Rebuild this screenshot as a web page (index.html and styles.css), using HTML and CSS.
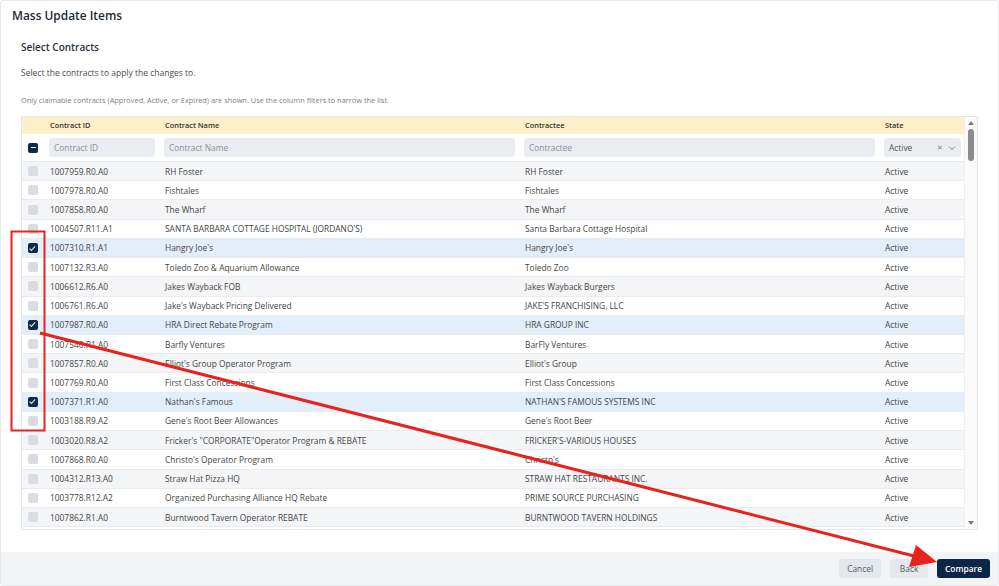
FILE: index.html
```html
<!DOCTYPE html>
<html lang="en">
<head>
    <meta charset="UTF-8">
    <title>Mass Update Items</title>
    <link rel="stylesheet" href="styles.css">
</head>
<body>
<div class="modal">
    <div class="modal-title">Mass Update Items</div>
    <div class="modal-body">
        <h2>Select Contracts</h2>
        <p class="lead">Select the contracts to apply the changes to.</p>
        <p class="note">Only claimable contracts (Approved, Active, or Expired) are shown. Use the column filters to narrow the list.</p>

        <div class="table">
            <div class="grid">
                <div class="row head">
                    <div></div>
                    <div class="cell">Contract ID</div>
                    <div class="cell">Contract Name</div>
                    <div class="cell">Contractee</div>
                    <div class="cell">State</div>
                </div>
                <div class="row filters">
                    <div class="cbx-cell"><span class="cbx partial"></span></div>
                    <div class="cell"><div class="filter">Contract ID</div></div>
                    <div class="cell"><div class="filter">Contract Name</div></div>
                    <div class="cell"><div class="filter">Contractee</div></div>
                    <div class="cell"><div class="filter select"><span class="val">Active</span><span class="icons">&#x2715;<svg width="8" height="6" viewBox="0 0 8 6"><path d="M1 1.5 L4 4.5 L7 1.5" fill="none" stroke="#777" stroke-width="0.9"/></svg></span></div></div>
                </div>

                <div class="row odd"><div class="cbx-cell"><span class="cbx"></span></div><div class="cell">1007959.R0.A0</div><div class="cell">RH Foster</div><div class="cell">RH Foster</div><div class="cell">Active</div></div>
                <div class="row"><div class="cbx-cell"><span class="cbx"></span></div><div class="cell">1007978.R0.A0</div><div class="cell">Fishtales</div><div class="cell">Fishtales</div><div class="cell">Active</div></div>
                <div class="row odd"><div class="cbx-cell"><span class="cbx"></span></div><div class="cell">1007858.R0.A0</div><div class="cell">The Wharf</div><div class="cell">The Wharf</div><div class="cell">Active</div></div>
                <div class="row"><div class="cbx-cell"><span class="cbx"></span></div><div class="cell">1004507.R11.A1</div><div class="cell">SANTA BARBARA COTTAGE HOSPITAL (JORDANO'S)</div><div class="cell">Santa Barbara Cottage Hospital</div><div class="cell">Active</div></div>
                <div class="row selected"><div class="cbx-cell"><span class="cbx checked"></span></div><div class="cell">1007310.R1.A1</div><div class="cell">Hangry Joe's</div><div class="cell">Hangry Joe's</div><div class="cell">Active</div></div>
                <div class="row"><div class="cbx-cell"><span class="cbx"></span></div><div class="cell">1007132.R3.A0</div><div class="cell">Toledo Zoo &amp; Aquarium Allowance</div><div class="cell">Toledo Zoo</div><div class="cell">Active</div></div>
                <div class="row odd"><div class="cbx-cell"><span class="cbx"></span></div><div class="cell">1006612.R6.A0</div><div class="cell">Jakes Wayback FOB</div><div class="cell">Jakes Wayback Burgers</div><div class="cell">Active</div></div>
                <div class="row"><div class="cbx-cell"><span class="cbx"></span></div><div class="cell">1006761.R6.A0</div><div class="cell">Jake's Wayback Pricing Delivered</div><div class="cell">JAKE'S FRANCHISING, LLC</div><div class="cell">Active</div></div>
                <div class="row selected"><div class="cbx-cell"><span class="cbx checked"></span></div><div class="cell">1007987.R0.A0</div><div class="cell">HRA Direct Rebate Program</div><div class="cell">HRA GROUP INC</div><div class="cell">Active</div></div>
                <div class="row"><div class="cbx-cell"><span class="cbx"></span></div><div class="cell">1007540.R1.A0</div><div class="cell">Barfly Ventures</div><div class="cell">BarFly Ventures</div><div class="cell">Active</div></div>
                <div class="row odd"><div class="cbx-cell"><span class="cbx"></span></div><div class="cell">1007857.R0.A0</div><div class="cell">Elliot's Group Operator Program</div><div class="cell">Elliot's Group</div><div class="cell">Active</div></div>
                <div class="row"><div class="cbx-cell"><span class="cbx"></span></div><div class="cell">1007769.R0.A0</div><div class="cell">First Class Concessions</div><div class="cell">First Class Concessions</div><div class="cell">Active</div></div>
                <div class="row selected"><div class="cbx-cell"><span class="cbx checked"></span></div><div class="cell">1007371.R1.A0</div><div class="cell">Nathan's Famous</div><div class="cell">NATHAN'S FAMOUS SYSTEMS INC</div><div class="cell">Active</div></div>
                <div class="row"><div class="cbx-cell"><span class="cbx"></span></div><div class="cell">1003188.R9.A2</div><div class="cell">Gene's Root Beer Allowances</div><div class="cell">Gene's Root Beer</div><div class="cell">Active</div></div>
                <div class="row odd"><div class="cbx-cell"><span class="cbx"></span></div><div class="cell">1003020.R8.A2</div><div class="cell">Fricker's "CORPORATE"Operator Program &amp; REBATE</div><div class="cell">FRICKER'S-VARIOUS HOUSES</div><div class="cell">Active</div></div>
                <div class="row"><div class="cbx-cell"><span class="cbx"></span></div><div class="cell">1007868.R0.A0</div><div class="cell">Christo's Operator Program</div><div class="cell">Christo's</div><div class="cell">Active</div></div>
                <div class="row odd"><div class="cbx-cell"><span class="cbx"></span></div><div class="cell">1004312.R13.A0</div><div class="cell">Straw Hat Pizza HQ</div><div class="cell">STRAW HAT RESTAURANTS INC.</div><div class="cell">Active</div></div>
                <div class="row"><div class="cbx-cell"><span class="cbx"></span></div><div class="cell">1003778.R12.A2</div><div class="cell">Organized Purchasing Alliance HQ Rebate</div><div class="cell">PRIME SOURCE PURCHASING</div><div class="cell">Active</div></div>
                <div class="row odd"><div class="cbx-cell"><span class="cbx"></span></div><div class="cell">1007862.R1.A0</div><div class="cell">Burntwood Tavern Operator REBATE</div><div class="cell">BURNTWOOD TAVERN HOLDINGS</div><div class="cell">Active</div></div>
            </div>
            <div class="scrollbar">
                <span class="arrow up"></span>
                <span class="thumb"></span>
                <span class="arrow down"></span>
            </div>
        </div>
    </div>
    <div class="modal-footer">
        <button class="btn">Cancel</button>
        <button class="btn">Back</button>
        <button class="btn primary">Compare</button>
    </div>
</div>

<!-- annotation drawn over the screenshot -->
<svg class="markup" width="999" height="586" viewBox="0 0 999 586">
    <rect x="11.5" y="231.5" width="33" height="199" fill="none" stroke="#e8221c" stroke-width="2"/>
    <line x1="40" y1="333" x2="914" y2="556" stroke="#e8221c" stroke-width="3"/>
    <polygon points="937,562 909,567 916,545" fill="#e8221c"/>
</svg>
</body>
</html>
```

FILE: styles.css
```css
body {
    margin: 0;
    font-family: "Open Sans", "Noto Sans", sans-serif;
    background-color: #ffffff;
    color: #444;
}

.modal {
    width: 997px;
    height: 584px;
    border: 1px solid #e6e8eb;
    border-radius: 3px;
    display: flex;
    flex-direction: column;
    overflow: hidden;
}

.modal-title {
    font-size: 11.9px;
    font-weight: 600;
    color: #1e2a36;
    padding: 6px 11px 0;
    height: 20px;
}

.modal-body {
    flex: 1;
    padding: 0 20px;
}

h2 {
    font-size: 10px;
    font-weight: 600;
    color: #2a3440;
    margin: 13px 0 0;
    height: 16px;
}

.lead {
    font-size: 8.5px;
    color: #4a4a4a;
    margin: 11px 0 0;
    height: 14px;
}

.note {
    font-size: 7.4px;
    color: #808080;
    margin: 14px 0 0;
    height: 11px;
}

.table {
    margin-top: 10px;
    height: 414px;
    box-sizing: border-box;
    border: 1px solid #e4e6ea;
    display: flex;
    overflow: hidden;
}

.grid {
    flex: 1;
}

.row {
    display: grid;
    grid-template-columns: 27px 115px 360px 360px 1fr;
    align-items: center;
    height: 19.22px;
    box-sizing: border-box;
    border-bottom: 1px solid #e9ebef;
    font-size: 8.4px;
    color: #454545;
}

.row.odd {
    background-color: #f4f5f7;
}

.row.selected {
    background-color: #e3eefb;
}

.row.head {
    height: 17px;
    background-color: #fdefc9;
    border-bottom: none;
    font-size: 7.4px;
    font-weight: 600;
    color: #333;
    padding-bottom: 2px;
}

.row.filters {
    height: 28px;
    background-color: #ffffff;
}

.cell {
    padding: 0 9px 0 1px;
    white-space: nowrap;
    overflow: hidden;
}

.filters .cell {
    padding-left: 0;
}

.cbx-cell {
    display: flex;
    padding-left: 6px;
}

.cbx {
    width: 10px;
    height: 10px;
    border-radius: 2px;
    background-color: #d9dde3;
    position: relative;
}

.cbx.checked,
.cbx.partial {
    background-color: #0e2a4b;
}

.cbx.partial::after {
    content: "";
    position: absolute;
    left: 2.5px;
    top: 4.5px;
    width: 5px;
    height: 1px;
    background-color: #ffffff;
}

.cbx.checked::after {
    content: "";
    position: absolute;
    left: 3.4px;
    top: 1.6px;
    width: 2.2px;
    height: 4.6px;
    border: solid #ffffff;
    border-width: 0 1.2px 1.2px 0;
    transform: rotate(42deg);
}

.filter {
    height: 19px;
    border-radius: 3px;
    background-color: #e9ecf0;
    padding: 0 5px;
    display: flex;
    align-items: center;
    font-size: 8.4px;
    color: #8a8f96;
}

.filter.select {
    width: 77px;
    box-sizing: border-box;
    justify-content: space-between;
    color: #555;
}

.filter .icons {
    display: flex;
    align-items: center;
    gap: 5px;
    font-size: 7px;
    color: #888;
}

.scrollbar {
    width: 12px;
    background-color: #fafafa;
    border-left: 1px solid #efefef;
    display: flex;
    flex-direction: column;
    align-items: center;
    padding-top: 4px;
}

.arrow {
    width: 0;
    height: 0;
    border-left: 3.5px solid transparent;
    border-right: 3.5px solid transparent;
}

.arrow.up {
    border-bottom: 4px solid #7a7a7a;
}

.arrow.down {
    border-top: 4px solid #7a7a7a;
    margin-top: auto;
    margin-bottom: 4px;
}

.thumb {
    width: 6px;
    height: 32px;
    border-radius: 3px;
    background-color: #8c8c8c;
    margin-top: 4px;
}

.modal-footer {
    height: 33px;
    background-color: #f3f4f6;
    display: flex;
    justify-content: flex-end;
    align-items: center;
    gap: 9px;
    padding-right: 8px;
}

.btn {
    font-family: "Open Sans", "Noto Sans", sans-serif;
    font-size: 8.4px;
    height: 19px;
    min-width: 38px;
    padding: 0 8px;
    border: none;
    border-radius: 3px;
    background-color: #e4e7eb;
    color: #555c66;
    cursor: pointer;
}

.btn.primary {
    background-color: #0c2647;
    color: #ffffff;
    font-weight: 600;
}

.markup {
    position: absolute;
    left: 0;
    top: 0;
    pointer-events: none;
}
```
